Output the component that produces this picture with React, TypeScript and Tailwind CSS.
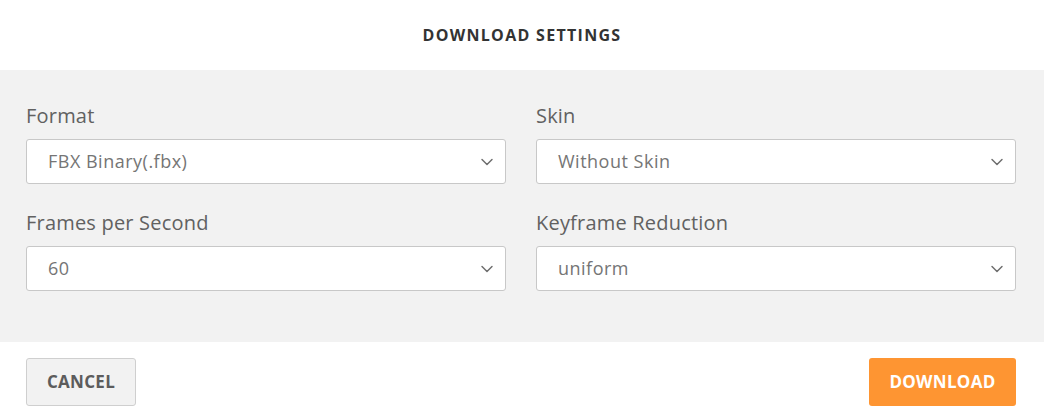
import { ChevronDown } from 'lucide-react';

function Field({ label, value }: { label: string; value: string }) {
  return (
    <div className="flex flex-col">
      <label className="text-[20px] leading-[26px] tracking-[0.2px] text-[#616161]">{label}</label>
      <div className="mt-[10px] h-[45px] flex items-center justify-between bg-white border border-[#c8c8c8] rounded-[3px] pl-[21px] pr-[8px]">
        <span className="text-[18px] tracking-[0.5px] text-[#757575]">{value}</span>
        <ChevronDown className="h-5 w-5 text-[#6e6e6e]" strokeWidth={1.75} />
      </div>
    </div>
  );
}

export default function App() {
  return (
    <div className="w-[1044px] h-[420px] bg-white flex flex-col" style={{ fontFamily: '"Open Sans", sans-serif' }}>
      <div className="h-[70px] flex items-center justify-center">
        <h1 className="text-[16px] font-bold tracking-[1.3px] text-[#333]">DOWNLOAD SETTINGS</h1>
      </div>
      <div className="bg-[#f2f2f2] h-[272px] pl-[26px] pr-[28px] pt-[33px] grid grid-cols-2 gap-x-[30px] gap-y-[26px] content-start">
        <Field label="Format" value="FBX Binary(.fbx)" />
        <Field label="Skin" value="Without Skin" />
        <Field label="Frames per Second" value="60" />
        <Field label="Keyframe Reduction" value="uniform" />
      </div>
      <div className="flex justify-between items-start pl-[26px] pr-[28px] pt-[16px]">
        <button className="h-[48px] w-[110px] bg-[#f2f2f2] border border-[#cfcfcf] rounded-[3px] text-[17px] font-bold tracking-[0.3px] text-[#5c5c5c]">
          CANCEL
        </button>
        <button className="h-[48px] w-[147px] bg-[#fe9532] rounded-[3px] text-[17px] font-bold tracking-[0.3px] text-white">
          DOWNLOAD
        </button>
      </div>
    </div>
  );
}
